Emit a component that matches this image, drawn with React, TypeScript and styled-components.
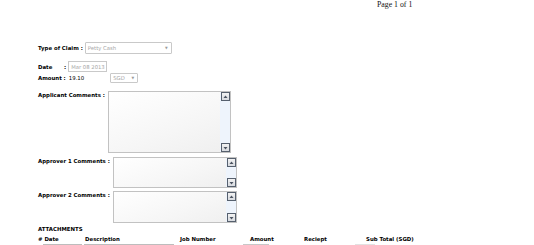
import React from "react"
import styled, { createGlobalStyle } from "styled-components"

const GlobalStyle = createGlobalStyle`
  html, body {
    margin: 0;
    padding: 0;
    background: #ffffff;
  }
  body {
    width: 534px;
    height: 245px;
    overflow: hidden;
  }
`

const LABEL_FONT = `"DejaVu Sans", Verdana, sans-serif`

const Page = styled.div`
  width: 534px;
  height: 245px;
  overflow: hidden;
  font-family: ${LABEL_FONT};
  font-size: 5.4px;
  color: #000;
`

const PageNumber = styled.div`
  font-family: "Liberation Serif", "Times New Roman", serif;
  font-size: 7.8px;
  line-height: 9px;
  padding-left: 377px;
  color: #111;
`

const Form = styled.div`
  display: flex;
  flex-direction: column;
  padding-left: 38px;
`

const Row = styled.div<{ $top: number; $align?: string }>`
  display: flex;
  align-items: ${p => p.$align || "center"};
  margin-top: ${p => p.$top}px;
`

const Label = styled.span<{ $width?: number; $pad?: number; $gap?: number }>`
  font-weight: bold;
  white-space: pre;
  min-width: ${p => (p.$width ? `${p.$width}px` : "auto")};
  padding-top: ${p => p.$pad || 0}px;
  margin-right: ${p => (p.$gap === undefined ? 3 : p.$gap)}px;
`

const Value = styled.span`
  white-space: pre;
`

const Select = styled.div<{ $width: number; $height: number; $left?: number }>`
  box-sizing: border-box;
  width: ${p => p.$width}px;
  height: ${p => p.$height}px;
  margin-left: ${p => p.$left || 0}px;
  border: 1px solid #c9c9c9;
  border-radius: 1px;
  background: #fff;
  color: #a8a8a8;
  display: flex;
  align-items: center;
  justify-content: space-between;
  padding: 0 3px 0 2px;
  font-size: 5.3px;
`

const Caret = styled.span`
  font-size: 3.5px;
  color: #9a9a9a;
`

const DateInput = styled.div`
  box-sizing: border-box;
  width: 39px;
  height: 11px;
  border: 1px solid #c9c9c9;
  color: #a8a8a8;
  display: flex;
  align-items: center;
  padding-left: 2px;
  font-size: 5.3px;
`

const Area = styled.div<{ $width: number; $height: number }>`
  box-sizing: border-box;
  width: ${p => p.$width}px;
  height: ${p => p.$height}px;
  border: 1px solid #c2c2c2;
  background: linear-gradient(160deg, #ffffff 0%, #f6f6f6 60%, #efefef 100%);
  display: flex;
  justify-content: flex-end;
`

const ScrollTrack = styled.div`
  width: 10px;
  background: #eef4fc;
  display: flex;
  flex-direction: column;
  justify-content: space-between;
`

const ScrollButton = styled.div`
  box-sizing: border-box;
  width: 9px;
  height: 9px;
  margin: 0 0 0 1px;
  border: 1px solid #56606e;
  background: linear-gradient(#f2f2f2, #d8dbe0);
  display: flex;
  align-items: center;
  justify-content: center;
`

const Arrow = ({ down }: { down?: boolean }) => (
  <svg width="5" height="4" viewBox="0 0 5 4">
    <path d={down ? "M0.5 1 L4.5 1 L2.5 3.5 Z" : "M0.5 3 L4.5 3 L2.5 0.5 Z"} fill="#4a5260" />
  </svg>
)

const CommentBox = ({ width, height }: { width: number; height: number }) => (
  <Area $width={width} $height={height}>
    <ScrollTrack>
      <ScrollButton><Arrow /></ScrollButton>
      <ScrollButton><Arrow down /></ScrollButton>
    </ScrollTrack>
  </Area>
)

const SectionTitle = styled.div`
  font-weight: bold;
  margin-top: 2px;
  line-height: 8px;
`

const TableHead = styled.div`
  display: grid;
  grid-template-columns: 47px 95px 70px 54px 62px auto;
  font-weight: bold;
  line-height: 8px;
  margin-top: 2px;
`

const TableRow = styled.div`
  display: grid;
  grid-template-columns: 5px 39px 2px 90px 69px 26px 86px 20px;
  margin-top: 1px;
  height: 6px;
`

const Cell = styled.div<{ $border?: string }>`
  border-top: 1px solid ${p => p.$border || "transparent"};
  border-left: 1px solid ${p => p.$border || "transparent"};
  border-right: 1px solid ${p => p.$border || "transparent"};
`

export default function App() {
  return (
    <>
      <GlobalStyle />
      <Page>
        <PageNumber>Page 1 of 1</PageNumber>
        <Form>
          <Row $top={33}>
            <Label $gap={2}>Type of Claim :</Label>
            <Select $width={87} $height={12}>
              <span>Petty Cash</span>
              <Caret>▼</Caret>
            </Select>
          </Row>
          <Row $top={7}>
            <Label $width={26} $gap={0}>Date</Label>
            <Label $gap={2}>:</Label>
            <DateInput>Mar 08 2013</DateInput>
          </Row>
          <Row $top={1}>
            <Label>Amount :</Label>
            <Value>19.10</Value>
            <Select $width={28} $height={10} $left={26}>
              <span>SGD</span>
              <Caret>▼</Caret>
            </Select>
          </Row>
          <Row $top={8} $align="flex-start">
            <Label $pad={1}>Applicant Comments :</Label>
            <CommentBox width={123} height={62} />
          </Row>
          <Row $top={4} $align="flex-start">
            <Label $pad={1}>Approver 1 Comments :</Label>
            <CommentBox width={124} height={31} />
          </Row>
          <Row $top={3} $align="flex-start">
            <Label $pad={1}>Approver 2 Comments :</Label>
            <CommentBox width={124} height={32} />
          </Row>
          <SectionTitle>ATTACHMENTS</SectionTitle>
          <TableHead>
            <span># Date</span>
            <span>Description</span>
            <span>Job Number</span>
            <span>Amount</span>
            <span>Reciept</span>
            <span>Sub Total (SGD)</span>
          </TableHead>
          <TableRow>
            <span />
            <Cell $border="#bdbdbd" />
            <span />
            <Cell $border="#bdbdbd" />
            <span />
            <Cell $border="#c8c8c8" />
            <span />
            <Cell $border="#e2e2e2" />
          </TableRow>
        </Form>
      </Page>
    </>
  )
}
